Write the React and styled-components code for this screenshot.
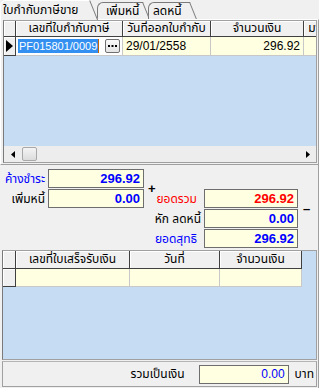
import styled, { createGlobalStyle } from "styled-components";

const colors = {
  face: "#f0f0f0",
  sky: "#c6dcf3",
  cream: "#ffffe1",
  line: "#c8c8c8",
  frame: "#a0a0a0",
  dark: "#7a7a7a",
  edge: "#404040",
  blue: "#0000ff",
  red: "#ff0000",
  select: "#3390f0",
};

const GlobalStyle = createGlobalStyle`
  *, *::before, *::after { box-sizing: border-box; }
  html, body { margin: 0; padding: 0; background: ${colors.face}; }
  body {
    font-family: "Liberation Sans", "Noto Sans Thai", Tahoma, "DejaVu Sans", sans-serif;
    font-size: 12px;
    color: #000;
  }
`;

const Window = styled.div`
  width: 319px;
  height: 388px;
  overflow: hidden;
  display: flex;
  flex-direction: column;
  background: ${colors.face};
`;

const TabStrip = styled.div`
  position: relative;
  z-index: 2;
  display: flex;
  align-items: flex-end;
  height: 19px;
`;

const Tab = styled.div`
  position: relative;
  z-index: ${(p) => (p.$active ? 5 : p.$z)};
  flex-shrink: 0;
  width: ${(p) => p.$w}px;
  height: ${(p) => (p.$active ? 20 : 17)}px;
  margin-bottom: ${(p) => (p.$active ? -1 : 0)}px;
  margin-right: ${(p) => p.$gap}px;
  padding-left: ${(p) => p.$pad}px;
  font-size: 12px;
  line-height: ${(p) => (p.$active ? 18 : 16)}px;
  white-space: nowrap;
  background: ${colors.face};
  border-top: 1px solid ${(p) => (p.$active ? "#fff" : colors.dark)};
  border-left: 1px solid ${(p) => (p.$active ? "#fff" : colors.dark)};
  border-top-left-radius: 6px;

  &::after {
    content: "";
    position: absolute;
    z-index: -1;
    top: -1px;
    left: calc(100% - 10px);
    width: 10px;
    height: calc(100% + 1px);
    background: ${colors.face};
    border-top: 1px solid ${(p) => (p.$active ? "#fff" : colors.dark)};
    border-right: 1px solid ${colors.dark};
    transform: skewX(22deg);
    transform-origin: top left;
  }
`;

const TabPage = styled.div`
  position: relative;
  z-index: 1;
  height: 146px;
  flex-shrink: 0;
  display: flex;
  flex-direction: column;
  padding: 0 1px 1px 2px;
  border-top: 1px solid #fff;
  border-left: 1px solid #fff;
  border-right: 1px solid ${colors.frame};
  border-bottom: 1px solid ${colors.frame};
`;

const Grid = styled.div`
  display: flex;
  flex-direction: column;
  flex: ${(p) => (p.$fill ? 1 : "none")};
  height: ${(p) => (p.$h ? `${p.$h}px` : "auto")};
  margin: ${(p) => p.$margin || 0};
  overflow: hidden;
  background: ${colors.sky};
  border: 1px solid ${colors.frame};
  border-left-color: ${colors.dark};
`;

const Row = styled.div`
  display: flex;
  flex-shrink: 0;
  height: ${(p) => p.$h}px;
`;

const HeadCell = styled.div`
  flex-shrink: 0;
  width: ${(p) => p.$w}px;
  overflow: hidden;
  white-space: nowrap;
  text-align: center;
  font-size: 12px;
  line-height: ${(p) => p.$lh || 15}px;
  background: ${colors.face};
  border-right: 1px solid ${colors.edge};
  border-bottom: 1px solid ${colors.edge};
  box-shadow: inset 1px 1px #fff;
`;

const Indicator = styled(HeadCell)`
  display: flex;
  align-items: center;
  justify-content: center;
`;

const Cell = styled.div`
  flex-shrink: 0;
  width: ${(p) => p.$w}px;
  overflow: hidden;
  white-space: nowrap;
  padding: 0 3px;
  text-align: ${(p) => p.$align || "left"};
  font-size: ${(p) => p.$fs || 12}px;
  line-height: ${(p) => p.$lh || 18}px;
  background: ${colors.cream};
  border-right: 1px solid ${colors.line};
  border-bottom: 1px solid ${colors.line};
`;

const EditCell = styled.div`
  flex-shrink: 0;
  display: flex;
  align-items: center;
  width: ${(p) => p.$w}px;
  padding: 0 2px 0 2px;
  background: #fff;
  border-right: 1px solid ${colors.line};
  border-bottom: 1px solid ${colors.line};
`;

const Selected = styled.span`
  height: 14px;
  padding: 0 1px;
  font-size: 11px;
  line-height: 14px;
  color: #fff;
  background: ${colors.select};
  border-right: 1px solid #c86400;
`;

const DotButton = styled.div`
  display: flex;
  align-items: center;
  justify-content: center;
  width: 15px;
  height: 14px;
  margin-left: auto;
  background: linear-gradient(#fafafa, #e4e4e4);
  border: 1px solid #707070;
  border-radius: 2px;
`;

const Body = styled.div`
  flex: 1;
`;

const HScroll = styled.div`
  display: flex;
  align-items: center;
  flex-shrink: 0;
  height: 16px;
  background: #ededed;
`;

const ArrowButton = styled.div`
  display: flex;
  align-items: center;
  justify-content: center;
  width: 17px;
  height: 16px;
  margin-left: ${(p) => (p.$end ? "auto" : 0)};
`;

const Thumb = styled.div`
  width: 15px;
  height: 14px;
  margin-left: 1px;
  border: 1px solid #a8a8a8;
  border-radius: 2px;
  background: linear-gradient(#f4f4f4, #dcdcdc);
`;

const Lower = styled.div`
  flex: 1;
  display: flex;
  flex-direction: column;
  border-right: 1px solid ${colors.frame};
`;

const Summary = styled.div`
  display: grid;
  grid-template-columns: 47px 97px 14px 46px 94px 1fr;
  grid-template-rows: repeat(4, 20px);
  height: 85px;
  flex-shrink: 0;
  padding-top: 4px;
`;

const Label = styled.div`
  grid-column: ${(p) => p.$col};
  grid-row: ${(p) => p.$row};
  display: flex;
  align-items: center;
  justify-content: flex-end;
  padding-right: ${(p) => p.$pr}px;
  padding-bottom: 1px;
  white-space: nowrap;
  font-size: 12px;
  color: ${(p) => p.$color || "#000"};
`;

const ValueBox = styled.div`
  grid-column: ${(p) => p.$col};
  grid-row: ${(p) => p.$row};
  width: ${(p) => p.$w}px;
  height: 19px;
  margin-left: ${(p) => p.$ml || 0}px;
  padding-right: 3px;
  text-align: right;
  font-size: ${(p) => (p.$bold ? 13 : 12)}px;
  font-weight: ${(p) => (p.$bold ? 700 : 400)};
  line-height: 17px;
  color: ${(p) => p.$color};
  background: ${colors.cream};
  border: 1px solid #6e6e6e;
`;

const Sign = styled.div`
  grid-column: ${(p) => p.$col};
  grid-row: ${(p) => p.$row};
  align-self: center;
  padding-left: ${(p) => p.$pl}px;
  font-size: 13px;
  font-weight: 700;
  line-height: 10px;
`;

const Footer = styled.div`
  display: flex;
  align-items: center;
  justify-content: flex-end;
  flex-shrink: 0;
  height: 26px;
  margin: 1px 1px 0 2px;
  padding-right: 2px;
  border: 1px solid ${colors.frame};
  border-top-color: #b4b4b4;
`;

const FooterLabel = styled.span`
  margin-right: 14px;
  font-size: 12px;
`;

const Unit = styled.span`
  margin-left: 6px;
  font-size: 12px;
`;

const RowArrow = () => (
  <svg width="7" height="12" viewBox="0 0 7 12">
    <polygon points="0,0 7,6 0,12" fill="#000" />
  </svg>
);

const Dots = () => (
  <svg width="9" height="2" viewBox="0 0 9 2">
    <rect x="0" y="0" width="2" height="2" fill="#000" />
    <rect x="3.5" y="0" width="2" height="2" fill="#000" />
    <rect x="7" y="0" width="2" height="2" fill="#000" />
  </svg>
);

const ScrollArrow = ({ right }) => (
  <svg width="4" height="7" viewBox="0 0 4 7">
    <polygon points={right ? "0,0 4,3.5 0,7" : "4,0 0,3.5 4,7"} fill="#000" />
  </svg>
);

const App = () => {
  return (
    <Window>
      <GlobalStyle />
      <TabStrip>
        <Tab $active $w={90} $gap={7} $pad={2}>
          ใบกำกับภาษีขาย
        </Tab>
        <Tab $w={46} $gap={5} $pad={8} $z={1}>
          เพิ่มหนี้
        </Tab>
        <Tab $w={42} $gap={0} $pad={4} $z={2}>
          ลดหนี้
        </Tab>
      </TabStrip>

      <TabPage>
        <Grid $fill>
          <Row $h={16}>
            <HeadCell $w={12} />
            <HeadCell $w={107}>เลขที่ใบกำกับภาษี</HeadCell>
            <HeadCell $w={88}>วันที่ออกใบกำกับ</HeadCell>
            <HeadCell $w={93}>จำนวนเงิน</HeadCell>
            <HeadCell $w={40}>มาจาก</HeadCell>
          </Row>
          <Row $h={19}>
            <Indicator $w={12}>
              <RowArrow />
            </Indicator>
            <EditCell $w={107}>
              <Selected>PF015801/0009</Selected>
              <DotButton>
                <Dots />
              </DotButton>
            </EditCell>
            <Cell $w={88} $fs={12}>
              29/01/2558
            </Cell>
            <Cell $w={93} $align="right" $fs={12}>
              296.92
            </Cell>
            <Cell $w={40} />
          </Row>
          <Body />
          <HScroll>
            <ArrowButton>
              <ScrollArrow />
            </ArrowButton>
            <Thumb />
            <ArrowButton $end>
              <ScrollArrow right />
            </ArrowButton>
          </HScroll>
        </Grid>
      </TabPage>

      <Lower>
        <Summary>
          <Label $col={1} $row={1} $pr={2} $color={colors.blue}>
            ค้างชำระ
          </Label>
          <ValueBox $col={2} $row={1} $w={96} $ml={1} $bold $color={colors.blue}>
            296.92
          </ValueBox>
          <Label $col={1} $row={2} $pr={2}>
            เพิ่มหนี้
          </Label>
          <ValueBox $col={2} $row={2} $w={96} $ml={1} $bold $color={colors.blue}>
            0.00
          </ValueBox>
          <Sign $col={3} $row="1 / span 2" $pl={4}>
            +
          </Sign>

          <Label $col={4} $row={2} $pr={7} $color={colors.red}>
            ยอดรวม
          </Label>
          <ValueBox $col={5} $row={2} $w={94} $bold $color={colors.red}>
            296.92
          </ValueBox>
          <Label $col={4} $row={3} $pr={3}>
            หัก ลดหนี้
          </Label>
          <ValueBox $col={5} $row={3} $w={94} $bold $color={colors.blue}>
            0.00
          </ValueBox>
          <Label $col={4} $row={4} $pr={7} $color={colors.blue}>
            ยอดสุทธิ
          </Label>
          <ValueBox $col={5} $row={4} $w={94} $bold $color={colors.blue}>
            296.92
          </ValueBox>
          <Sign $col={6} $row="2 / span 2" $pl={5}>
            –
          </Sign>
        </Summary>

        <Grid $h={110} $margin="0 1px 0 2px">
          <Row $h={18}>
            <HeadCell $w={13} $lh={16} />
            <HeadCell $w={114} $lh={16}>
              เลขที่ใบเสร็จรับเงิน
            </HeadCell>
            <HeadCell $w={90} $lh={16}>
              วันที่
            </HeadCell>
            <HeadCell $w={82} $lh={16}>
              จำนวนเงิน
            </HeadCell>
          </Row>
          <Row $h={18}>
            <HeadCell $w={13} />
            <Cell $w={114} />
            <Cell $w={90} />
            <Cell $w={82} />
          </Row>
          <Body />
        </Grid>

        <Footer>
          <FooterLabel>รวมเป็นเงิน</FooterLabel>
          <ValueBox $w={90} $color={colors.blue}>
            0.00
          </ValueBox>
          <Unit>บาท</Unit>
        </Footer>
      </Lower>
    </Window>
  );
};

export default App;
